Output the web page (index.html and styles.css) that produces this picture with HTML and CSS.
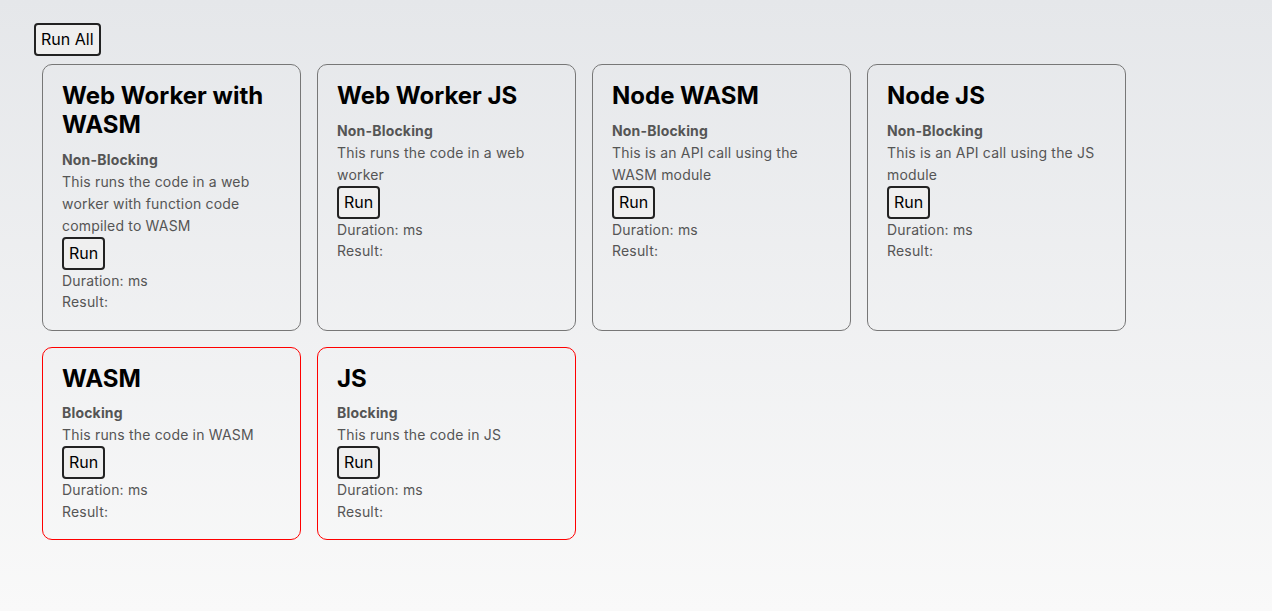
FILE: index.html
```html
<!DOCTYPE html>
<html lang="en">
<head>
    <meta charset="UTF-8">
    <meta name="viewport" content="width=device-width, initial-scale=1.0">
    <title>WASM vs JS</title>
    <link rel="stylesheet" href="styles.css">
</head>
<body>

<button class="run-all">Run All</button>

<div class="card-grid">
    <div class="card">
        <h2>Web Worker with WASM</h2>
        <p class="kind">Non-Blocking</p>
        <p class="desc">This runs the code in a web worker with function code compiled to WASM</p>
        <button class="run">Run</button>
        <p class="stat">Duration: ms</p>
        <p class="stat">Result:</p>
    </div>
    <div class="card">
        <h2>Web Worker JS</h2>
        <p class="kind">Non-Blocking</p>
        <p class="desc">This runs the code in a web worker</p>
        <button class="run">Run</button>
        <p class="stat">Duration: ms</p>
        <p class="stat">Result:</p>
    </div>
    <div class="card">
        <h2>Node WASM</h2>
        <p class="kind">Non-Blocking</p>
        <p class="desc">This is an API call using the WASM module</p>
        <button class="run">Run</button>
        <p class="stat">Duration: ms</p>
        <p class="stat">Result:</p>
    </div>
    <div class="card">
        <h2>Node JS</h2>
        <p class="kind">Non-Blocking</p>
        <p class="desc">This is an API call using the JS module</p>
        <button class="run">Run</button>
        <p class="stat">Duration: ms</p>
        <p class="stat">Result:</p>
    </div>
    <div class="card blocking">
        <h2>WASM</h2>
        <p class="kind">Blocking</p>
        <p class="desc">This runs the code in WASM</p>
        <button class="run">Run</button>
        <p class="stat">Duration: ms</p>
        <p class="stat">Result:</p>
    </div>
    <div class="card blocking">
        <h2>JS</h2>
        <p class="kind">Blocking</p>
        <p class="desc">This runs the code in JS</p>
        <button class="run">Run</button>
        <p class="stat">Duration: ms</p>
        <p class="stat">Result:</p>
    </div>
</div>

</body>
</html>
```

FILE: styles.css
```css
html {
    min-height: 100%;
    background: linear-gradient(to bottom, #e5e7ea, #f9f9f9);
}
body {
    margin: 0;
    padding: 23px 34px;
    font-family: Inter, "Noto Sans", sans-serif;
    color: #000;
}
button {
    font-family: inherit;
    font-size: 16px;
    color: #000;
    background: #efefef;
    border: 2px solid #222;
    border-radius: 4px;
    padding: 4px 5px;
    line-height: 21px;
    cursor: pointer;
}
.card-grid {
    display: grid;
    grid-template-columns: repeat(4, 259px);
    gap: 16px;
    margin: 8px 8px 0;
}
.card {
    border: 1px solid #777;
    border-radius: 10px;
    padding: 17px 19px;
    font-size: 14px;
    line-height: 22px;
    letter-spacing: 0.18px;
    color: #555;
}
.card.blocking {
    border-color: #f00;
}
.card h2 {
    margin: 0 0 9px;
    font-size: 24px;
    line-height: 1.2;
    font-weight: 700;
    letter-spacing: 0;
    color: #000;
}
.card p {
    margin: 0;
}
.card .kind {
    font-weight: 700;
}
.card .stat {
    line-height: 21.5px;
}
.card .run {
    display: block;
    letter-spacing: 0;
}
```
